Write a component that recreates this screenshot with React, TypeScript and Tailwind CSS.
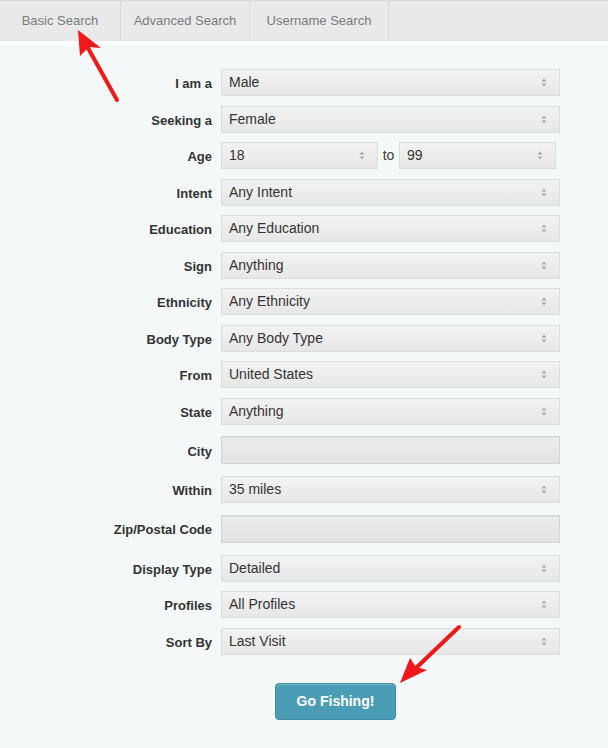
import React from "react";

type Row = { label: string; value?: string; kind: "select" | "text" | "age" };

const rows: Row[] = [
  { label: "I am a", value: "Male", kind: "select" },
  { label: "Seeking a", value: "Female", kind: "select" },
  { label: "Age", kind: "age" },
  { label: "Intent", value: "Any Intent", kind: "select" },
  { label: "Education", value: "Any Education", kind: "select" },
  { label: "Sign", value: "Anything", kind: "select" },
  { label: "Ethnicity", value: "Any Ethnicity", kind: "select" },
  { label: "Body Type", value: "Any Body Type", kind: "select" },
  { label: "From", value: "United States", kind: "select" },
  { label: "State", value: "Anything", kind: "select" },
  { label: "City", kind: "text" },
  { label: "Within", value: "35 miles", kind: "select" },
  { label: "Zip/Postal Code", kind: "text" },
  { label: "Display Type", value: "Detailed", kind: "select" },
  { label: "Profiles", value: "All Profiles", kind: "select" },
  { label: "Sort By", value: "Last Visit", kind: "select" },
];

function Carets() {
  return (
    <svg width="6" height="9" viewBox="0 0 6 9" className="shrink-0">
      <path d="M3 0.5 L5.5 3.5 L0.5 3.5 Z" fill="#a9a9a9" />
      <path d="M3 8.5 L5.5 5.5 L0.5 5.5 Z" fill="#a9a9a9" />
    </svg>
  );
}

function FakeSelect({ value, width }: { value: string; width: string }) {
  return (
    <div
      className={`${width} h-[27px] flex items-center justify-between pl-[7px] pr-[12px] border border-[#dcdcdc] bg-gradient-to-b from-[#f2f2f2] to-[#e7e7e7] text-[14px] text-[#333]`}
    >
      <span>{value}</span>
      <Carets />
    </div>
  );
}

export default function App() {
  return (
    <div className="relative w-[608px] h-[748px] bg-[#f5f8f9] font-[family-name:'Liberation_Sans',Arial,sans-serif] overflow-hidden">
      {/* tab bar */}
      <div className="flex h-[45px] bg-[#e9e9e9] border-t border-[#dadada] border-b-[4px] border-b-white text-[13px] text-[#7a7a7a]">
        <div className="w-[121px] flex items-center justify-center border-r border-[#d6d6d6]">Basic Search</div>
        <div className="w-[129px] flex items-center justify-center border-r border-[#d6d6d6]">Advanced Search</div>
        <div className="w-[139px] flex items-center justify-center border-r border-[#d6d6d6]">Username Search</div>
      </div>

      {/* form */}
      <div className="flex flex-col pt-[24px]">
        {rows.map((r) => (
          <div
            key={r.label}
            className={`flex items-center ${r.kind === "text" ? "h-[28px] mt-[2px] mb-[12px]" : "h-[27px] mb-[9.5px]"}`}
          >
            <div className="w-[221px] pr-[9px] pt-[3px] text-right text-[13px] font-bold text-[#333]">{r.label}</div>
            {r.kind === "select" && <FakeSelect value={r.value!} width="w-[339px]" />}
            {r.kind === "text" && (
              <div className="w-[339px] h-[28px] border border-[#d4d4d4] bg-gradient-to-b from-[#ececec] to-[#e3e3e3] shadow-[inset_0_1px_1px_rgba(0,0,0,0.06)]" />
            )}
            {r.kind === "age" && (
              <div className="flex items-center">
                <FakeSelect value="18" width="w-[157px]" />
                <span className="w-[21px] text-center text-[14px] text-[#444]">to</span>
                <FakeSelect value="99" width="w-[157px]" />
              </div>
            )}
          </div>
        ))}

        <div className="flex pl-[275px] pt-[19px]">
          <button className="w-[121px] h-[37px] rounded-[4px] bg-[#4a9db4] border border-[#3f8ea4] shadow-[inset_0_1px_0_rgba(255,255,255,0.25)] text-white text-[14px] font-bold">
            Go Fishing!
          </button>
        </div>
      </div>

      {/* red annotation arrows */}
      <svg className="absolute left-0 top-0 pointer-events-none" width="608" height="748">
        <line x1="117" y1="100" x2="88" y2="48" stroke="#f01818" strokeWidth="4" strokeLinecap="round" />
        <path d="M78 30 L101 48 L89 47 L80 56 Z" fill="#f01818" />
        <line x1="459" y1="627" x2="416" y2="668" stroke="#f01818" strokeWidth="4" strokeLinecap="round" />
        <path d="M400 683 L410 658 L416 667 L427 670 Z" fill="#f01818" />
      </svg>
    </div>
  );
}
